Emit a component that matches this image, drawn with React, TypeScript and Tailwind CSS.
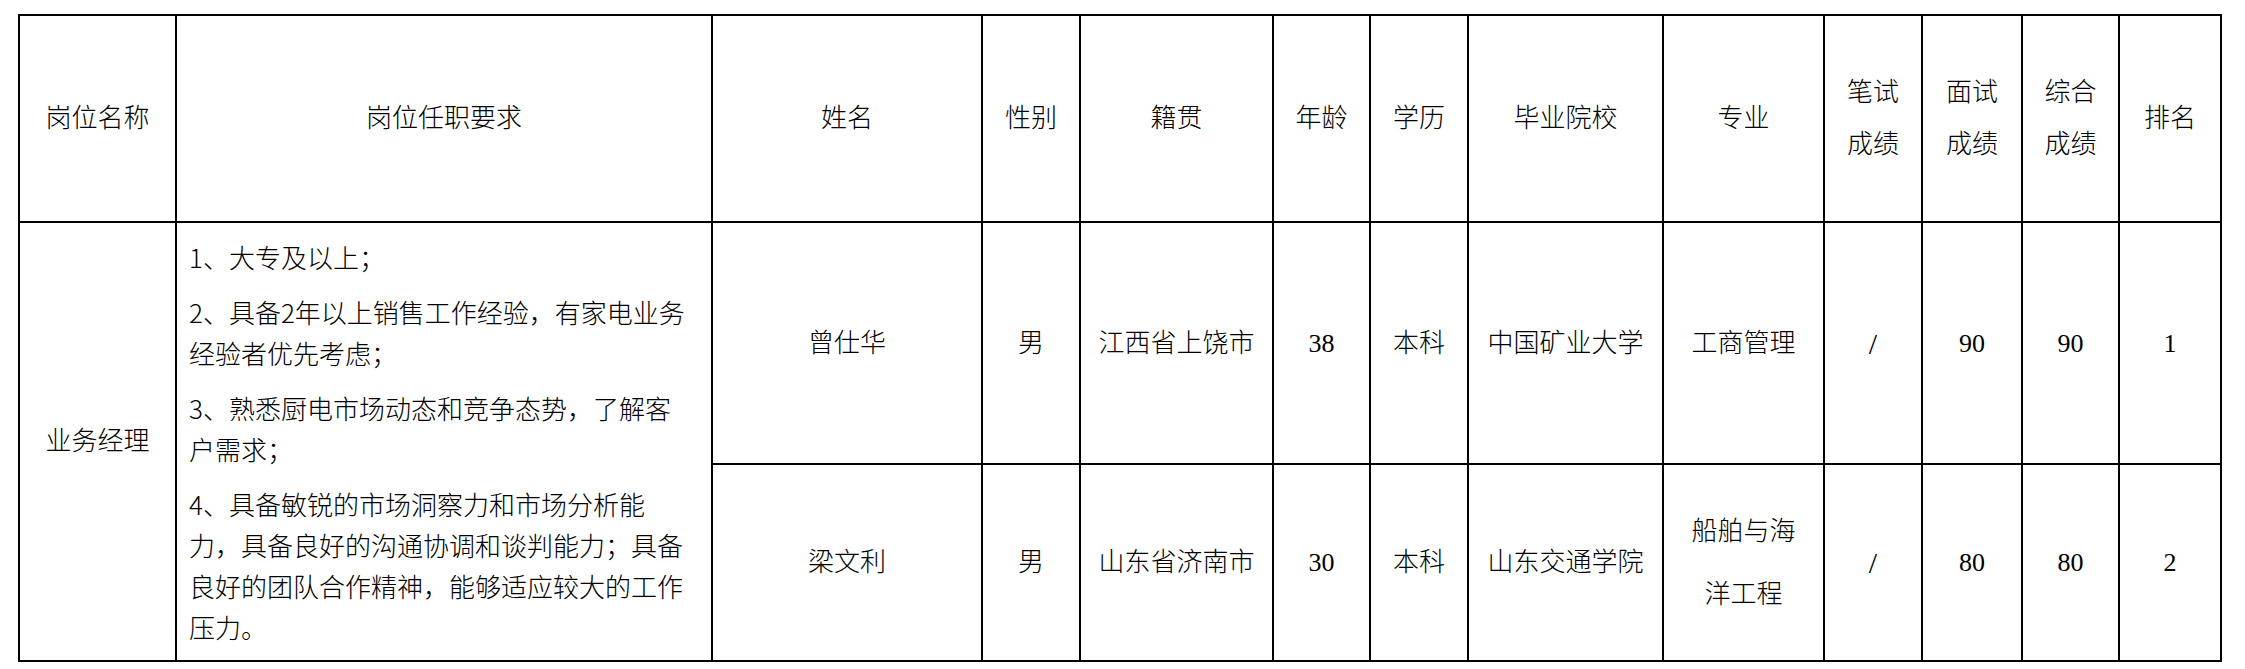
import React from "react"

const head = [
  ["岗位名称"],
  ["岗位任职要求"],
  ["姓名"],
  ["性别"],
  ["籍贯"],
  ["年龄"],
  ["学历"],
  ["毕业院校"],
  ["专业"],
  ["笔试", "成绩"],
  ["面试", "成绩"],
  ["综合", "成绩"],
  ["排名"],
]

const people = [
  {
    name: "曾仕华",
    sex: "男",
    origin: "江西省上饶市",
    age: "38",
    degree: "本科",
    school: "中国矿业大学",
    major: ["工商管理"],
    written: "/",
    interview: "90",
    total: "90",
    rank: "1",
  },
  {
    name: "梁文利",
    sex: "男",
    origin: "山东省济南市",
    age: "30",
    degree: "本科",
    school: "山东交通学院",
    major: ["船舶与海", "洋工程"],
    written: "/",
    interview: "80",
    total: "80",
    rank: "2",
  },
]

const requirements = [
  ["1、大专及以上；"],
  ["2、具备2年以上销售工作经验，有家电业务", "经验者优先考虑；"],
  ["3、熟悉厨电市场动态和竞争态势，了解客", "户需求；"],
  [
    "4、具备敏锐的市场洞察力和市场分析能",
    "力，具备良好的沟通协调和谈判能力；具备",
    "良好的团队合作精神，能够适应较大的工作",
    "压力。",
  ],
]

const cell = "bg-white flex items-center justify-center text-center"

export default function App() {
  return (
    <div
      className="w-[2245px] h-[669px] bg-white pt-[14px] pl-[18px] text-black font-light"
      style={{ fontFamily: '"Liberation Serif", "Noto Sans CJK SC", serif' }}
    >
      <div className="inline-grid bg-black p-[2px] gap-[2px] grid-cols-[155px_534px_268px_96px_191px_95px_96px_193px_159px_96px_98px_95px_100px] grid-rows-[205px_240px_195px] text-[26px]">
        {/* header */}
        {head.map((h) => (
          <div key={h.join("")} className={`${cell} flex-col leading-[52px]`}>
            {h.map((line) => (
              <span key={line}>{line}</span>
            ))}
          </div>
        ))}

        {/* position */}
        <div className={`${cell} row-span-2`}>业务经理</div>

        {/* requirements */}
        <div
          className="bg-white row-span-2 flex flex-col justify-center gap-[14px] pl-[12px] leading-[41px] whitespace-nowrap"
          style={{ fontFamily: '"Noto Sans CJK SC", sans-serif' }}
        >
          {requirements.map((p, i) => (
            <div key={i}>
              {p.map((line) => (
                <div key={line}>{line}</div>
              ))}
            </div>
          ))}
        </div>

        {/* candidates */}
        {people.map((p, r) => (
          <React.Fragment key={p.name}>
            <div className={`${cell} ${r === 0 ? "row-start-2" : "row-start-3"} col-start-3`}>{p.name}</div>
            <div className={cell}>{p.sex}</div>
            <div className={cell}>{p.origin}</div>
            <div className={cell}>{p.age}</div>
            <div className={cell}>{p.degree}</div>
            <div className={cell}>{p.school}</div>
            <div className={`${cell} flex-col leading-[63px]`}>
              {p.major.map((m) => (
                <span key={m}>{m}</span>
              ))}
            </div>
            <div className={`${cell} text-[30px]`}>{p.written}</div>
            <div className={cell}>{p.interview}</div>
            <div className={cell}>{p.total}</div>
            <div className={cell}>{p.rank}</div>
          </React.Fragment>
        ))}
      </div>
    </div>
  )
}
